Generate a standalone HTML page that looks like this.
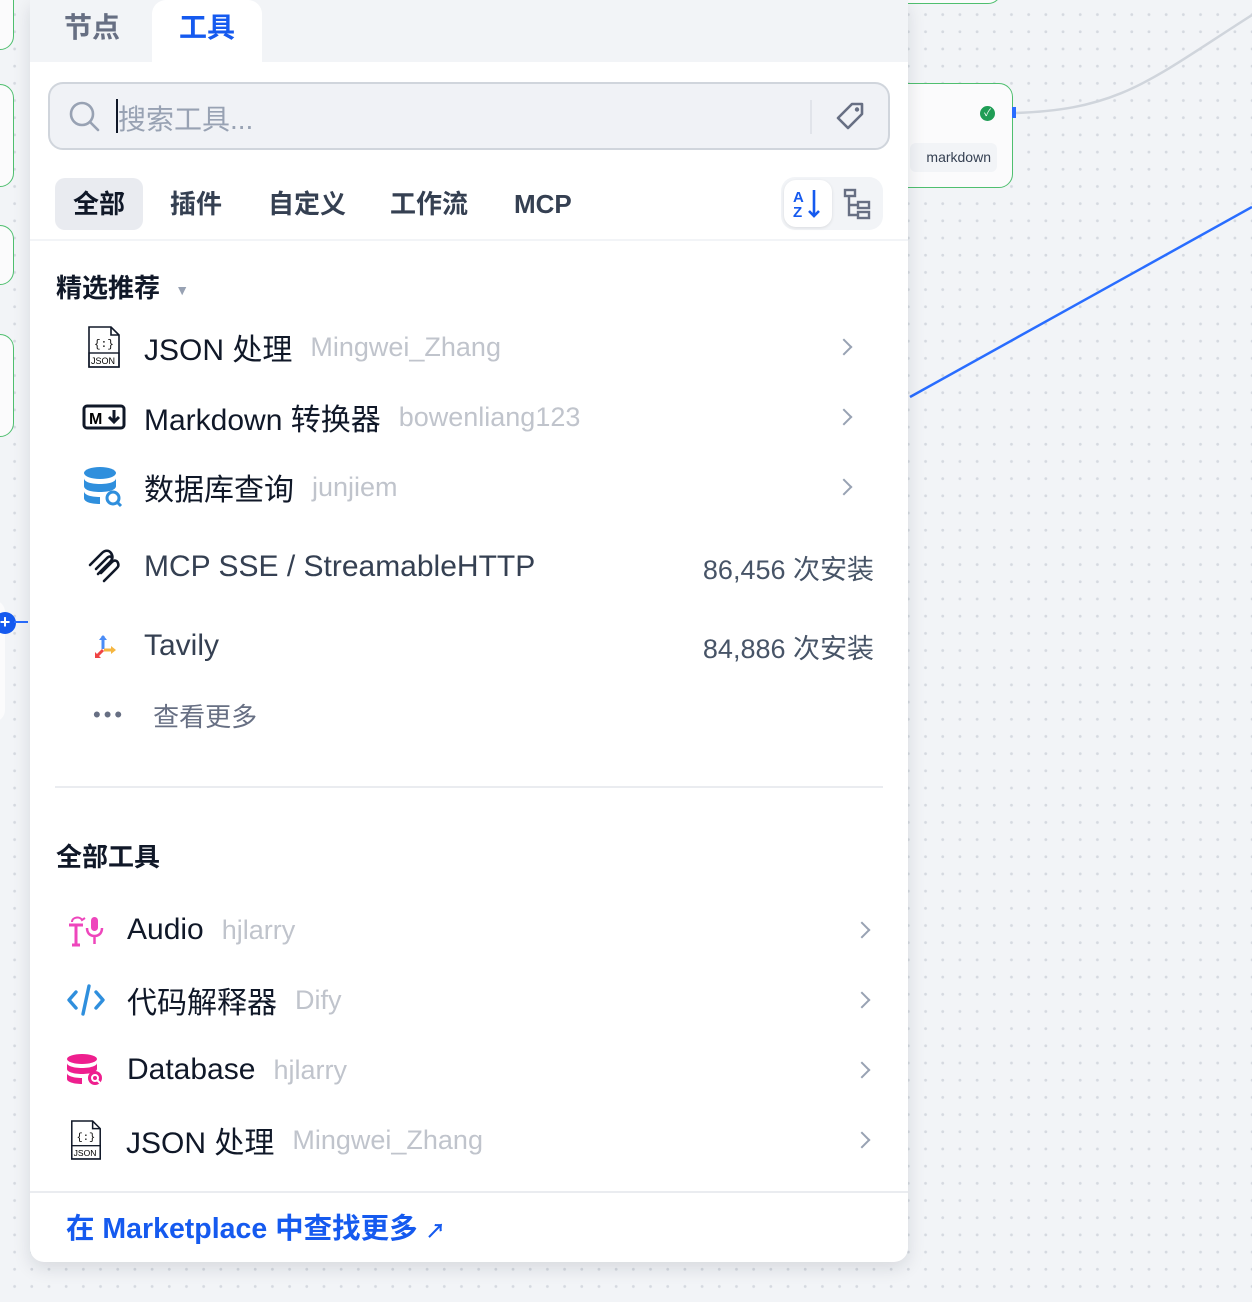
<!DOCTYPE html>
<html><head><meta charset="utf-8"><style>
*{box-sizing:border-box;margin:0;padding:0}
body{width:1252px;height:1302px;overflow:hidden;position:relative;font-family:"Liberation Sans","Noto Sans CJK SC",sans-serif;background-color:#f2f4f7;background-image:radial-gradient(circle,#d5d9e0 1.3px,transparent 1.6px);background-size:17.2px 17.2px;background-position:6px 6px}
.abs{position:absolute}
.node{position:absolute;background:#fbfbfc;border:1.5px solid #4fbf6f;border-radius:14px}
#panel{position:absolute;left:30px;top:0;width:878px;height:1262px;background:#fff;border-radius:0 0 14px 14px;box-shadow:0 6px 18px rgba(16,24,40,.12);overflow:hidden}
.tabs{height:62px;background:#f2f4f7;position:relative}
.tab{position:absolute;top:0;height:62px;font-size:28px;font-weight:bold;line-height:56px;text-align:center}
.search{position:absolute;left:18px;top:82px;width:842px;height:68px;background:#f0f2f6;border:2px solid #d0d5dc;border-radius:15px}
.cat{position:absolute;top:178px;height:52px;line-height:52px;font-size:26px;font-weight:bold;color:#354052;padding:0 18px;border-radius:10px}
.row{position:absolute;left:0;right:0;height:60px;display:flex;align-items:center}
.t{font-size:30px;color:#101828;white-space:nowrap}
.a{font-size:27px;color:#c0c4cc;margin-left:18px;white-space:nowrap}
.chev{position:absolute;width:12px;height:12px;border-right:2.5px solid #98a2b3;border-top:2.5px solid #98a2b3;transform:rotate(45deg)}
.h{position:absolute;left:26px;font-size:26px;font-weight:bold;color:#101828}
.cnt{position:absolute;right:34px;font-size:27px;color:#475467}
</style></head><body>
<div class="node" style="left:-20px;top:-20px;width:34px;height:70px"></div>
<div class="node" style="left:-20px;top:84px;width:34px;height:103px"></div>
<div class="node" style="left:-20px;top:225px;width:34px;height:60px"></div>
<div class="node" style="left:-20px;top:334px;width:34px;height:103px"></div>
<div class="abs" style="left:-20px;top:600px;width:25px;height:122px;background:#fbfbfc;border-radius:12px"></div>
<div class="abs" style="left:-6px;top:612px;width:22px;height:22px;border-radius:50%;background:#155aef;color:#fff;font-size:18px;line-height:21px;text-align:center;font-weight:bold">+</div>
<div class="abs" style="left:14px;top:621px;width:14px;height:2px;background:#296dff"></div>
<div class="node" style="left:880px;top:-30px;width:122px;height:34px"></div>
<div class="node" style="left:880px;top:83px;width:133px;height:105px"></div>
<div class="abs" style="left:980px;top:106px;width:15px;height:15px;border-radius:50%;background:#1f9d55;color:#fff;font-size:10px;line-height:15px;text-align:center">✓</div>
<div class="abs" style="left:910px;top:143px;width:87px;height:29px;background:#f2f4f7;border-radius:6px;font-size:14px;color:#354052;line-height:29px;text-align:right;padding-right:6px">markdown</div>
<svg class="abs" style="left:0;top:0" width="1252" height="1302"><path d="M1014 113 C1120 110 1150 80 1252 15" stroke="#d0d5dc" stroke-width="2.5" fill="none"/><path d="M910 397 L1252 207" stroke="#296dff" stroke-width="2.5" fill="none"/><rect x="1012" y="107" width="4" height="11" fill="#296dff"/></svg>

<div id="panel">
 <div class="tabs">
  <div class="tab" style="left:12px;width:100px;color:#676f83">节点</div>
  <div class="tab" style="left:122px;width:110px;background:#fff;border-radius:14px 14px 0 0;color:#155aef">工具</div>
 </div>
 <div class="search">
  <svg class="abs" style="left:18px;top:16px" width="34" height="34" viewBox="0 0 34 34"><circle cx="14" cy="14" r="11" stroke="#98a2b3" stroke-width="2.6" fill="none"/><path d="M22 22l8 8" stroke="#98a2b3" stroke-width="2.6" stroke-linecap="round"/></svg>
  <div class="abs" style="left:66px;top:15px;width:2px;height:34px;background:#101828"></div>
  <div class="abs" style="left:68px;top:14px;font-size:28px;color:#98a2b3">搜索工具...</div>
  <div class="abs" style="left:760px;top:16px;width:2px;height:34px;background:#e1e4ea"></div>
  <svg class="abs" style="left:782px;top:14px" width="38" height="38" viewBox="0 0 38 38"><path d="M20 6h10v10L16 30 6 20Z" stroke="#676f83" stroke-width="2.6" fill="none" stroke-linejoin="round"/><circle cx="25" cy="11.5" r="2.2" fill="#676f83"/></svg>
 </div>
 <div class="cat" style="left:25px;width:88px;background:#e9ebf0;color:#101828">全部</div>
 <div class="cat" style="left:122px">插件</div>
 <div class="cat" style="left:220px">自定义</div>
 <div class="cat" style="left:342px">工作流</div>
 <div class="cat" style="left:466px">MCP</div>
 <div class="abs" style="left:751px;top:177px;width:102px;height:53px;background:#f2f4f7;border-radius:14px"></div>
 <div class="abs" style="left:754px;top:180px;width:48px;height:47px;background:#fff;border-radius:12px;box-shadow:0 1px 3px rgba(0,0,0,.1)"></div>
 <svg class="abs" style="left:760px;top:186px" width="36" height="36" viewBox="0 0 36 36"><text x="3" y="16" font-size="15" font-weight="bold" fill="#155aef" font-family="Liberation Sans">A</text><text x="3" y="31" font-size="15" font-weight="bold" fill="#155aef" font-family="Liberation Sans">Z</text><path d="M24 4v26M19 25l5 5 5-5" stroke="#155aef" stroke-width="2.6" fill="none"/></svg>
 <svg class="abs" style="left:812px;top:186px" width="32" height="36" viewBox="0 0 32 36"><rect x="3" y="4" width="10" height="6" stroke="#676f83" stroke-width="2.4" fill="none"/><rect x="16" y="16" width="11" height="6" stroke="#676f83" stroke-width="2.4" fill="none"/><rect x="16" y="26" width="11" height="6" stroke="#676f83" stroke-width="2.4" fill="none"/><path d="M7 10v19h9M7 19h9" stroke="#676f83" stroke-width="2.4" fill="none"/></svg>
 <div class="abs" style="left:0;top:239px;width:878px;height:2px;background:#f2f4f7"></div>

 <div class="h" style="top:268px">精选推荐 <span style="color:#98a2b3;font-size:14px;margin-left:8px;vertical-align:middle">▼</span></div>

 <div class="row" style="top:317px">
  <svg style="margin-left:55px" width="38" height="44" viewBox="0 0 38 44"><path d="M4 2h22l8 8v32H4Z" stroke="#101828" stroke-width="1.6" fill="#fff"/><path d="M26 2v8h8" stroke="#101828" stroke-width="1.6" fill="none"/><text x="9" y="22" font-size="11" font-family="Liberation Mono">{:}</text><rect x="4" y="28" width="30" height="14" fill="none" stroke="#101828" stroke-width="1.4"/><text x="6" y="39" font-size="9" font-family="Liberation Sans">JSON</text></svg>
  <span class="t" style="margin-left:21px">JSON 处理</span><span class="a">Mingwei_Zhang</span>
  <div class="chev" style="left:808px;top:24px"></div></div>
 <div class="row" style="top:387px">
  <svg style="margin-left:52px" width="44" height="26" viewBox="0 0 44 26"><rect x="2" y="2" width="40" height="22" rx="3" stroke="#101828" stroke-width="3" fill="none"/><text x="7" y="20" font-size="16" font-weight="bold" font-family="Liberation Sans">M</text><path d="M32 6v11M27 13l5 5 5-5" stroke="#101828" stroke-width="3" fill="none"/></svg>
  <span class="t" style="margin-left:18px">Markdown 转换器</span><span class="a">bowenliang123</span>
  <div class="chev" style="left:808px;top:24px"></div></div>
 <div class="row" style="top:457px">
  <svg style="margin-left:52px" width="42" height="44" viewBox="0 0 42 44"><ellipse cx="18" cy="8" rx="16" ry="6" fill="#2f8fdd"/><path d="M2 13c0 4 7 6 16 6s16-2 16-6v8c0 4-7 6-16 6S2 25 2 21Z" fill="#2f8fdd"/><path d="M2 26c0 4 7 6 16 6v7c-9 0-16-2-16-6Z" fill="#2f8fdd"/><circle cx="31" cy="33" r="6" stroke="#2f8fdd" stroke-width="3" fill="#fff"/><path d="M35 37l4 4" stroke="#2f8fdd" stroke-width="3"/></svg>
  <span class="t" style="margin-left:20px">数据库查询</span><span class="a">junjiem</span>
  <div class="chev" style="left:808px;top:24px"></div></div>
 <div class="row" style="top:537px">
  <svg style="margin-left:56px" width="36" height="36" viewBox="0 0 36 36"><path d="M4 16L16 4c3-3 7-3 9 0s2 6-1 9L12 25M10 20L21 9c2-2 4-2 5 0M15 24l11-11c2-2 5-2 6 1s0 4-2 6L18 32" stroke="#101828" stroke-width="2.6" fill="none" stroke-linecap="round"/></svg>
  <span class="t" style="margin-left:22px;color:#354052">MCP SSE / StreamableHTTP</span>
  <span class="cnt" style="top:11px">86,456 次安装</span></div>
 <div class="row" style="top:616px">
  <svg style="margin-left:62px" width="26" height="26" viewBox="0 0 26 26"><path d="M11 3v13" stroke="#4a8cf7" stroke-width="3"/><path d="M7 7l4-5 4 5Z" fill="#4a8cf7"/><path d="M12 17h9" stroke="#f5b640" stroke-width="3"/><path d="M19 13l5 4-5 4Z" fill="#f5b640"/><path d="M11 17l-6 6" stroke="#ef4444" stroke-width="3"/><path d="M3 19v6h6Z" fill="#ef4444"/></svg>
  <span class="t" style="margin-left:26px;color:#354052">Tavily</span>
  <span class="cnt" style="top:11px">84,886 次安装</span></div>
 <div class="row" style="top:685px">
  <span style="margin-left:63px;color:#676f83;font-size:22px;letter-spacing:3px">•••</span>
  <span style="margin-left:28px;font-size:26px;color:#676f83">查看更多</span></div>

 <div class="abs" style="left:25px;top:786px;width:828px;height:2px;background:#eaecf0"></div>
 <div class="h" style="top:837px">全部工具</div>

 <div class="row" style="top:900px">
  <svg style="margin-left:36px" width="40" height="34" viewBox="0 0 40 34"><path d="M3 12h14M10 12v20M6 32h8" stroke="#ee46bc" stroke-width="3" fill="none"/><path d="M6 9c0-5 8-6 10-2l3-2" stroke="#ee46bc" stroke-width="2" fill="none"/><rect x="25" y="4" width="7" height="14" rx="3.5" fill="#ee46bc"/><path d="M21 15c0 6 4 8 7.5 8s7.5-2 7.5-8M28.5 23v8" stroke="#ee46bc" stroke-width="2.5" fill="none"/></svg>
  <span class="t" style="margin-left:21px">Audio</span><span class="a">hjlarry</span>
  <div class="chev" style="left:826px;top:24px"></div></div>
 <div class="row" style="top:970px">
  <svg style="margin-left:36px" width="40" height="34" viewBox="0 0 40 34"><path d="M10 9l-7 8 7 8M30 9l7 8-7 8M23 3l-6 28" stroke="#2f8fdd" stroke-width="3.4" fill="none" stroke-linecap="round" stroke-linejoin="round"/></svg>
  <span class="t" style="margin-left:21px">代码解释器</span><span class="a">Dify</span>
  <div class="chev" style="left:826px;top:24px"></div></div>
 <div class="row" style="top:1040px">
  <svg style="margin-left:36px" width="40" height="34" viewBox="0 0 40 34"><ellipse cx="16" cy="6" rx="15" ry="5" fill="#ee1f8e"/><path d="M1 10c0 3 7 5 15 5s15-2 15-5v6c0 3-7 5-15 5S1 19 1 16Z" fill="#ee1f8e"/><path d="M1 20c0 3 7 5 15 5v6c-8 0-15-2-15-5Z" fill="#ee1f8e"/><circle cx="29" cy="25" r="7" fill="#ee1f8e"/><circle cx="29" cy="25" r="3" stroke="#fff" stroke-width="2" fill="none"/><path d="M31 27l3 3" stroke="#fff" stroke-width="2"/></svg>
  <span class="t" style="margin-left:21px">Database</span><span class="a">hjlarry</span>
  <div class="chev" style="left:826px;top:24px"></div></div>
 <div class="row" style="top:1110px">
  <svg style="margin-left:38px" width="36" height="44" viewBox="0 0 38 44"><path d="M4 2h22l8 8v32H4Z" stroke="#101828" stroke-width="1.6" fill="#fff"/><path d="M26 2v8h8" stroke="#101828" stroke-width="1.6" fill="none"/><text x="9" y="22" font-size="11" font-family="Liberation Mono">{:}</text><rect x="4" y="28" width="30" height="14" fill="none" stroke="#101828" stroke-width="1.4"/><text x="6" y="39" font-size="9" font-family="Liberation Sans">JSON</text></svg>
  <span class="t" style="margin-left:22px">JSON 处理</span><span class="a">Mingwei_Zhang</span>
  <div class="chev" style="left:826px;top:24px"></div></div>

 <div class="abs" style="left:0;top:1191px;width:878px;height:2px;background:#eaecf0"></div>
 <div class="abs" style="left:36px;top:1206px;font-size:28.5px;font-weight:bold;color:#155aef">在 Marketplace 中查找更多 <span style="font-size:20px">↗</span></div>
</div>
</body></html>
